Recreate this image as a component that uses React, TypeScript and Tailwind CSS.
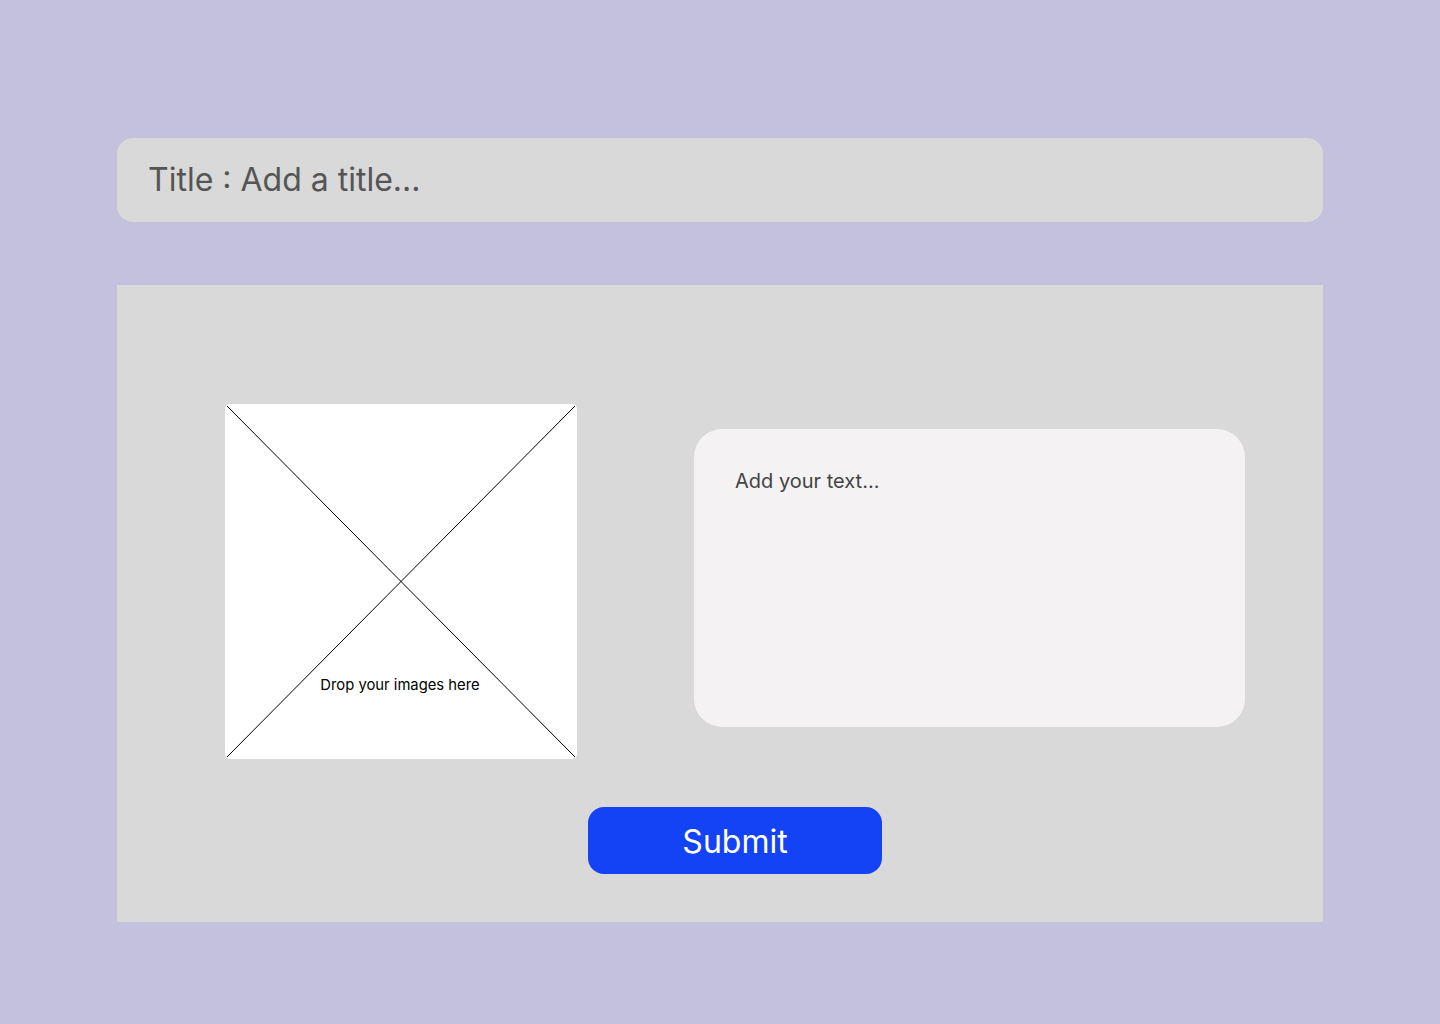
export default function App() {
  return (
    <div className="min-h-[1024px] w-[1440px] bg-[#c4c1de] px-[117px] pt-[138px]" style={{ fontFamily: "Inter, 'Noto Sans', sans-serif" }}>
      <div className="flex h-[84px] w-[1206px] items-center rounded-[16px] bg-[#d9d9d9] pl-[31px]">
        <span className="text-[32px] leading-none text-[#555555]">Title : Add a title...</span>
      </div>
      <div className="mt-[63px] h-[637px] w-[1206px] bg-[#d9d9d9] pl-[108px] pt-[119px]">
        <div className="flex items-start">
          <div className="relative h-[355px] w-[352px] overflow-hidden rounded-[5px] bg-white">
            <svg className="absolute inset-0" width="352" height="355" viewBox="0 0 352 355">
              <line x1="2" y1="2" x2="350" y2="353" stroke="#000" strokeWidth="1" />
              <line x1="350" y1="2" x2="2" y2="353" stroke="#000" strokeWidth="1" />
            </svg>
            <span className="absolute left-0 right-0 top-[274px] pr-[2px] text-center text-[14.8px] leading-none text-black">Drop your images here</span>
          </div>
          <div className="ml-[117px] mt-[25px] h-[298px] w-[551px] rounded-[28px] bg-[#f4f2f3] pl-[41px] pt-[41px]">
            <span className="text-[20px] leading-none text-[#444444]">Add your text...</span>
          </div>
        </div>
        <button className="ml-[363px] mt-[48px] flex h-[67px] w-[294px] items-center justify-center rounded-[16px] bg-[#1443f6] pt-[2px] text-[32px] leading-none text-white">
          Submit
        </button>
      </div>
    </div>
  );
}
